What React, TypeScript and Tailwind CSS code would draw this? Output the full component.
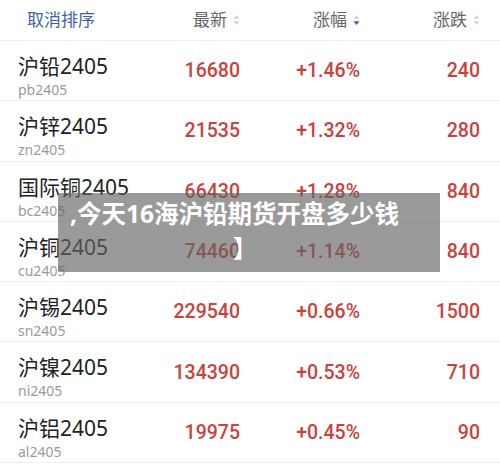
const rows = [
  { name: '沪铅2405', code: 'pb2405', price: '16680', pct: '+1.46%', chg: '240' },
  { name: '沪锌2405', code: 'zn2405', price: '21535', pct: '+1.32%', chg: '280' },
  { name: '国际铜2405', code: 'bc2405', price: '66430', pct: '+1.28%', chg: '840' },
  { name: '沪铜2405', code: 'cu2405', price: '74460', pct: '+1.14%', chg: '840' },
  { name: '沪锡2405', code: 'sn2405', price: '229540', pct: '+0.66%', chg: '1500' },
  { name: '沪镍2405', code: 'ni2405', price: '134390', pct: '+0.53%', chg: '710' },
  { name: '沪铝2405', code: 'al2405', price: '19975', pct: '+0.45%', chg: '90' },
]

function SortIcon({ active }: { active?: boolean }) {
  return (
    <svg width="7" height="12" viewBox="0 0 7 12" className="ml-[6px]">
      <path d="M3.5 1 L6.5 4.8 L0.5 4.8 Z" fill="#d4d4d4" />
      <path d="M3.5 11 L6.5 7.2 L0.5 7.2 Z" fill={active ? '#3d62ad' : '#d4d4d4'} />
    </svg>
  )
}

export default function App() {
  const cjk = { fontFamily: '"Noto Sans", "Noto Sans CJK SC", sans-serif' }
  const num = { fontFamily: 'Roboto, "Noto Sans", sans-serif' }
  return (
    <div className="relative h-[467px] w-[500px] overflow-hidden bg-white" style={cjk}>
      <div className="flex h-[41px] items-center border-b border-[#eeeeee] pr-[20px] text-[17px]">
        <div className="flex-1 pl-[27px] text-[#3d62ad]">取消排序</div>
        <div className="flex w-[120px] items-center justify-end text-[#666666]">
          最新
          <SortIcon />
        </div>
        <div className="flex w-[120px] items-center justify-end text-[#666666]">
          涨幅
          <SortIcon active />
        </div>
        <div className="flex w-[120px] items-center justify-end text-[#666666]">
          涨跌
          <SortIcon />
        </div>
      </div>

      {rows.map((r) => (
        <div key={r.code} className="flex h-[60.3px] border-b border-[#efefef] pr-[20px]">
          <div className="flex min-w-0 flex-1 flex-col whitespace-nowrap pl-[18px] pt-[11px]">
            <div className="text-[21px] leading-[28px] text-[#222222]">{r.name}</div>
            <div className="mt-[1px] text-[14px] leading-[18px] text-[#9a9a9a]">{r.code}</div>
          </div>
          {[r.price, r.pct, r.chg].map((v, i) => (
            <div
              key={i}
              className="flex w-[120px] shrink-0 items-center justify-end text-[19.5px] font-medium text-[#c8433d]"
              style={num}
            >
              {v}
            </div>
          ))}
        </div>
      ))}

      <div className="absolute left-[58px] top-[193px] flex h-[79px] w-[382px] flex-col bg-[#646464]/65 pl-[12px] pt-[4px] font-bold text-white">
        <div className="whitespace-nowrap text-[24.5px] leading-[34px]">,今天16海沪铅期货开盘多少钱</div>
        <div className="pl-[163px] text-[24px] leading-[34px]">】</div>
      </div>
    </div>
  )
}
